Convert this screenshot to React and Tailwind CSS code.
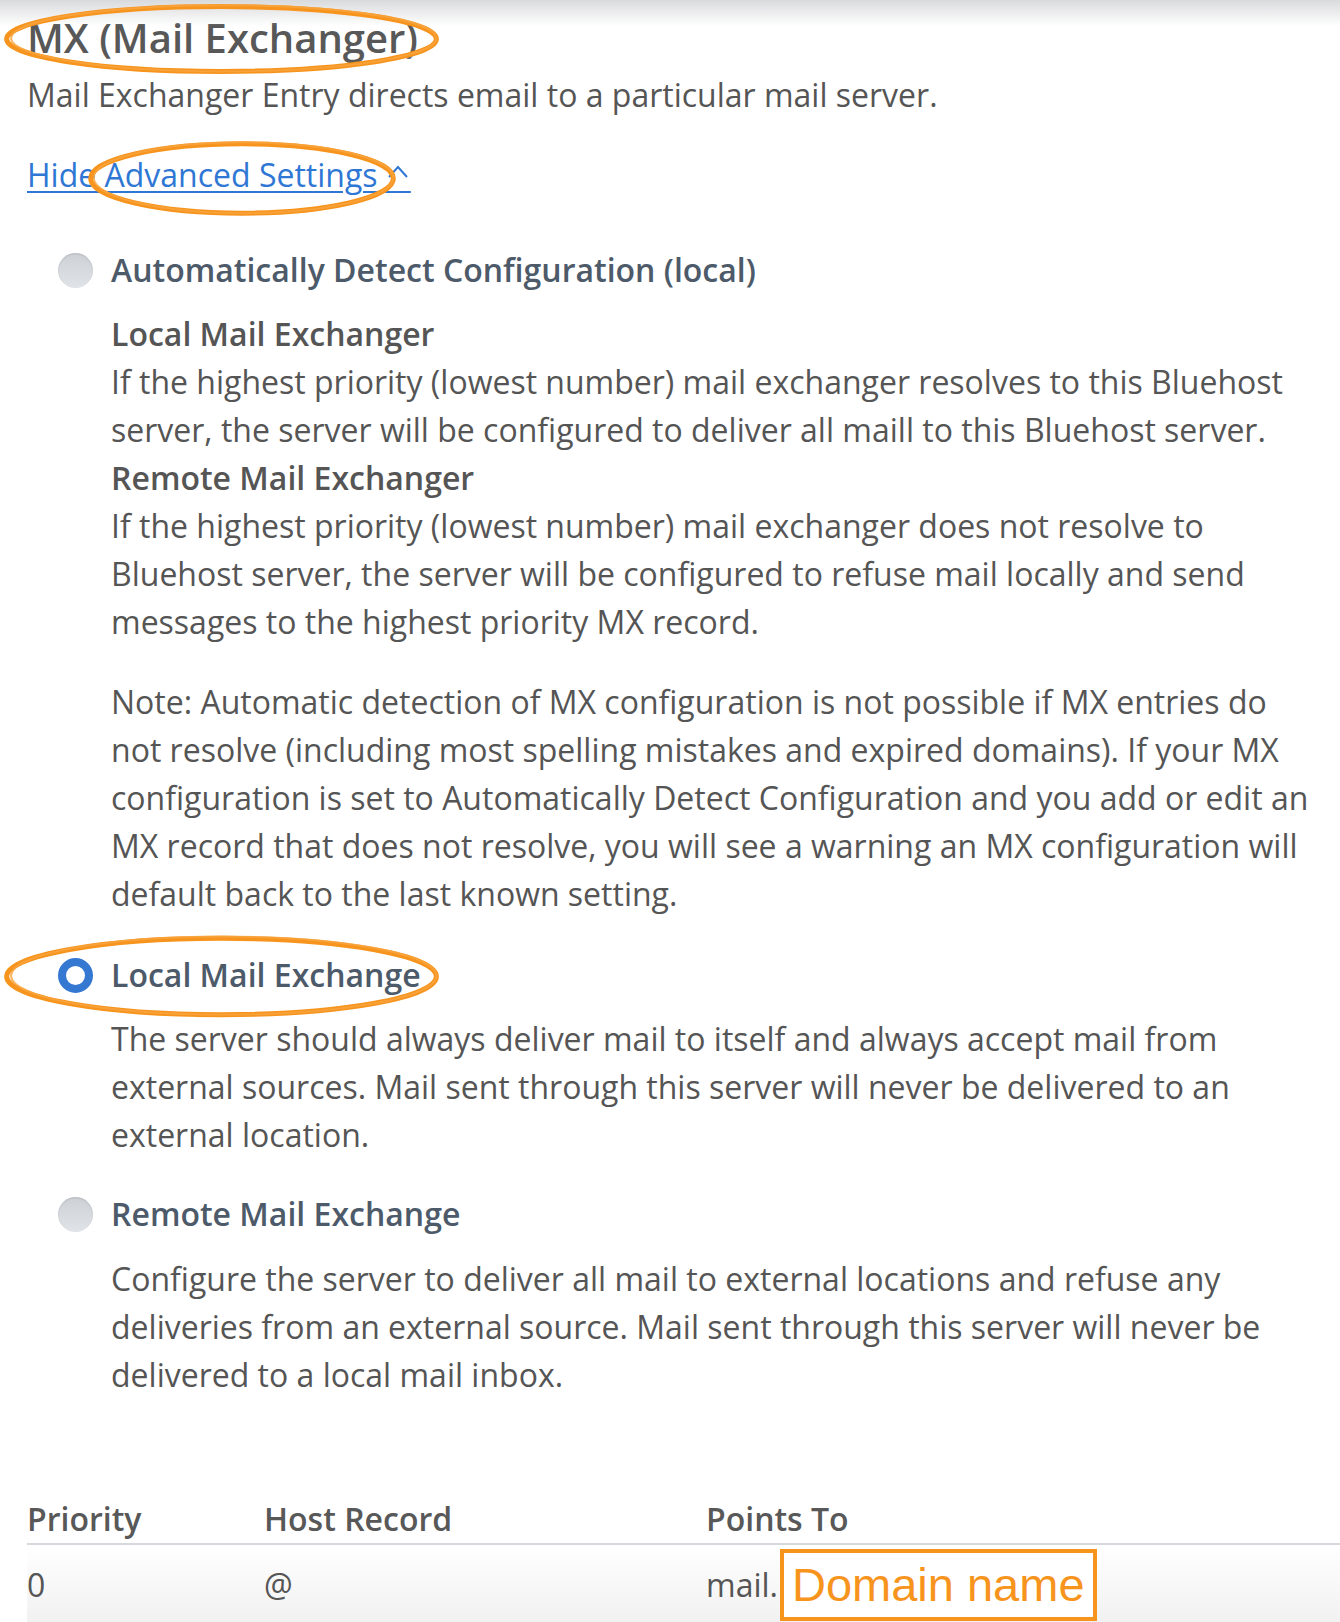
import React from 'react';

const Radio = ({ checked }) =>
  checked ? (
    <span className="block h-[35px] w-[35px] shrink-0 rounded-full border-[8px] border-[#3478d1] bg-white" />
  ) : (
    <span className="block h-[35px] w-[35px] shrink-0 rounded-full bg-gradient-to-b from-[#cdd1d6] to-[#e0e3e7] shadow-[inset_0_1px_2px_rgba(0,0,0,0.12)]" />
  );

const Option = ({ checked, label, className = '', children }) => (
  <div className={className}>
    <label className="flex items-center gap-[18px] pl-[31px]">
      <Radio checked={checked} />
      <span className="leading-[48px] font-semibold text-[#4d5a69]">{label}</span>
    </label>
    <div className="pl-[84px] leading-[48px] text-[#555]">{children}</div>
  </div>
);

// hand drawn orange marks over the screenshot
const Ellipse = ({ className }) => (
  <svg className={`pointer-events-none absolute ${className}`} viewBox="0 0 100 100" preserveAspectRatio="none">
    <ellipse cx="50" cy="50" rx="48.5" ry="45" fill="none" stroke="#f7941d" strokeWidth="5" vectorEffect="non-scaling-stroke" />
    <ellipse cx="50.5" cy="49" rx="48" ry="46" fill="none" stroke="#f9a53f" strokeWidth="2" vectorEffect="non-scaling-stroke" opacity="0.8" />
  </svg>
);

export default function App() {
  return (
    <div className="relative min-h-screen overflow-hidden bg-white font-['Open_Sans',sans-serif] text-[32px]">
      <div className="pointer-events-none absolute inset-x-0 top-0 h-[26px] bg-gradient-to-b from-[#d9dadc] to-white/0" />

      <div className="pl-[27px] pr-[24px] pt-[14px]">
        <h1 className="text-[40px] leading-[48px] font-semibold text-[#585858]">MX (Mail Exchanger)</h1>
        <p className="mt-[9px] leading-[48px] text-[#555]">
          Mail Exchanger Entry directs email to a particular mail server.
        </p>
        <a href="#" className="mt-[32px] inline-block leading-[48px] text-[#2f77d4] underline underline-offset-[4px] decoration-[2px]">
          Hide Advanced Settings{' '}
          <span className="relative">
            {'\u00a0\u00a0\u00a0'}
            <svg className="absolute left-[1px] top-[12px] h-[14px] w-[22px]" viewBox="0 0 22 14" fill="none">
              <path d="M2 12 L11 2 L20 12" stroke="#2f77d4" strokeWidth="2" />
            </svg>
          </span>
        </a>

        <Option className="mt-[47px]" label="Automatically Detect Configuration (local)">
          <div className="mt-[16px]">
            <p className="font-semibold">Local Mail Exchanger</p>
            <p>
              If the highest priority (lowest number) mail exchanger resolves to this Bluehost server, the server will be
              configured to deliver all maill to this Bluehost server.
            </p>
            <p className="font-semibold">Remote Mail Exchanger</p>
            <p>
              If the highest priority (lowest number) mail exchanger does not resolve to Bluehost server, the server will
              be configured to refuse mail locally and send messages to the highest priority MX record.
            </p>
            <p className="mt-8">
              Note: Automatic detection of MX configuration is not possible if MX entries do not resolve (including most
              spelling mistakes and expired domains). If your MX configuration is set to Automatically Detect
              Configuration and you add or edit an MX record that does not resolve, you will see a warning an MX
              configuration will default back to the last known setting.
            </p>
          </div>
        </Option>

        <Option className="mt-[33px]" checked label="Local Mail Exchange">
          <p className="mt-[16px]">
            The server should always deliver mail to itself and always accept mail from external sources. Mail sent
            through this server will never be delivered to an external location.
          </p>
        </Option>

        <Option className="mt-[31px]" label="Remote Mail Exchange">
          <p className="mt-[17px]">
            Configure the server to deliver all mail to external locations and refuse any deliveries from an external
            source. Mail sent through this server will never be delivered to a local mail inbox.
          </p>
        </Option>
      </div>

      <div className="mt-[96px] pl-[27px]">
        <div className="grid grid-cols-[237px_442px_1fr] border-b-2 border-[#d5d9de] leading-[48px] font-semibold text-[#585858]">
          <span>Priority</span>
          <span>Host Record</span>
          <span>Points To</span>
        </div>
        <div className="grid grid-cols-[237px_442px_1fr] items-center bg-gradient-to-b from-white to-[#f1f1f1] pt-[16px] pb-[14px] leading-[48px] text-[#555]">
          <span>0</span>
          <span>@</span>
          <span className="flex items-center">
            mail.
            <span className="-my-[13px] ml-[2px] border-4 border-[#f7941d] bg-white px-[8px] font-['Liberation_Sans',sans-serif] text-[47px] leading-[64px] text-[#f7941d]">
              Domain name
            </span>
          </span>
        </div>
      </div>

      <Ellipse className="left-0 top-[3px] h-[72px] w-[443px]" />
      <Ellipse className="left-[86px] top-[140px] h-[77px] w-[312px]" />
      <Ellipse className="left-0 top-[934px] h-[85px] w-[443px]" />
    </div>
  );
}
